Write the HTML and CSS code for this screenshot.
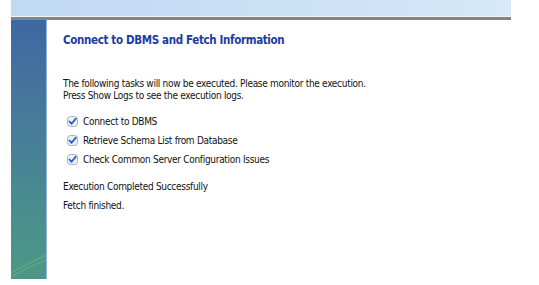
FILE: index.html
```html
<!DOCTYPE html>
<html lang="en">
<head>
  <meta charset="UTF-8" />
  <title>Connect to DBMS and Fetch Information</title>
  <link rel="stylesheet" href="styles.css">
</head>
<body>
  <div class="wizard">
    <div class="top-bar"></div>
    <div class="main">
      <div class="side-panel">
        <svg class="swoosh" width="36" height="40" viewBox="0 0 36 40">
          <path d="M0 34 Q18 24 36 16" stroke="#6fae8a" stroke-width="1.5" fill="none" opacity="0.6"/>
          <path d="M0 38 Q18 28 36 21" stroke="#6fae8a" stroke-width="1.5" fill="none" opacity="0.5"/>
        </svg>
      </div>
      <div class="content">
        <h2 class="title">Connect to DBMS and Fetch Information</h2>
        <p class="intro">The following tasks will now be executed. Please monitor the execution.<br>Press Show Logs to see the execution logs.</p>

        <ul class="tasks">
          <li>
            <svg class="check" width="11" height="11" viewBox="0 0 11 11">
              <rect x="0.5" y="0.5" width="10" height="10" rx="3" fill="#eef0f3" stroke="#a9b0ba"/>
              <path d="M2.5 5.5 L4.6 7.8 L8.8 2.6" stroke="#2a5fc9" stroke-width="1.8" fill="none" stroke-linecap="round" stroke-linejoin="round"/>
            </svg>
            Connect to DBMS
          </li>
          <li>
            <svg class="check" width="11" height="11" viewBox="0 0 11 11">
              <rect x="0.5" y="0.5" width="10" height="10" rx="3" fill="#eef0f3" stroke="#a9b0ba"/>
              <path d="M2.5 5.5 L4.6 7.8 L8.8 2.6" stroke="#2a5fc9" stroke-width="1.8" fill="none" stroke-linecap="round" stroke-linejoin="round"/>
            </svg>
            Retrieve Schema List from Database
          </li>
          <li>
            <svg class="check" width="11" height="11" viewBox="0 0 11 11">
              <rect x="0.5" y="0.5" width="10" height="10" rx="3" fill="#eef0f3" stroke="#a9b0ba"/>
              <path d="M2.5 5.5 L4.6 7.8 L8.8 2.6" stroke="#2a5fc9" stroke-width="1.8" fill="none" stroke-linecap="round" stroke-linejoin="round"/>
            </svg>
            Check Common Server Configuration Issues
          </li>
        </ul>

        <p class="status">Execution Completed Successfully</p>
        <p class="status">Fetch finished.</p>
      </div>
    </div>
  </div>
</body>
</html>
```

FILE: styles.css
```css
body {
  margin: 0;
  background: #fff;
  font-family: "DejaVu Sans Condensed", "DejaVu Sans", sans-serif;
  font-size: 10px;
  letter-spacing: -0.3px;
  color: #111;
}

.wizard {
  width: 500px;
  margin-left: 11px;
}

.top-bar {
  height: 16px;
  background: linear-gradient(90deg, #c0daf3, #c9e0f5 50%, #d6e8f9);
  border-bottom: 1px solid #eef5fc;
  box-shadow: 0 1px 0 #fff;
}

.main {
  display: flex;
  border-top: 3px solid #848484;
  height: 259px;
}

.side-panel {
  width: 35px;
  background: linear-gradient(180deg, #3f67a2, #46799c 35%, #4a8e8e 75%, #4c9785);
  border-right: 1px solid #8fb6df;
  display: flex;
  align-items: flex-end;
}

.swoosh {
  display: block;
}

.content {
  flex: 1;
  padding: 0 0 0 16px;
}

.title {
  margin: 13px 0 0;
  font-size: 11.5px;
  letter-spacing: -0.35px;
  font-weight: bold;
  color: #1c3c9e;
}

.intro {
  margin: 31px 0 0;
  line-height: 12px;
}

.tasks {
  list-style: none;
  margin: 10px 0 0;
  padding: 0 0 0 4px;
}

.tasks li {
  display: flex;
  align-items: center;
  gap: 5px;
  height: 19px;
}

.check {
  display: block;
}

.status {
  margin: 0;
  height: 19px;
  line-height: 19px;
}

.tasks + .status {
  margin-top: 8px;
}
```
